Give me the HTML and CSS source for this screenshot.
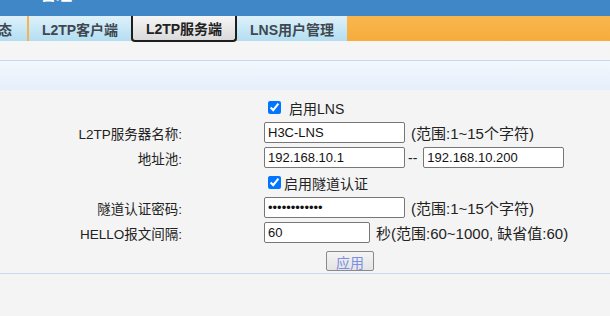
FILE: index.html
```html
<!DOCTYPE html>
<html lang="zh-CN">
<head>
    <meta charset="utf-8">
    <title>L2TP服务端</title>
    <link rel="stylesheet" href="styles.css">
</head>
<body>
    <header class="topbar">
        <span class="title">管理</span>
    </header>

    <nav class="tabs">
        <a class="tab tab-cut" href="#">运行状态</a>
        <a class="tab" href="#">L2TP客户端</a>
        <a class="tab active" href="#">L2TP服务端</a>
        <a class="tab" href="#">LNS用户管理</a>
    </nav>

    <div class="strip"></div>
    <div class="band"></div>

    <form class="form">
        <div class="row">
            <span class="label"></span>
            <label class="field"><input type="checkbox" checked><span class="spaced">启用LNS</span></label>
        </div>
        <div class="row">
            <span class="label">L2TP服务器名称:</span>
            <div class="field">
                <input class="text" type="text" value="H3C-LNS">
                <span class="hint">(范围:1~15个字符)</span>
            </div>
        </div>
        <div class="row">
            <span class="label">地址池:</span>
            <div class="field">
                <input class="text" type="text" value="192.168.10.1">
                <span class="dash">--</span>
                <input class="text" type="text" value="192.168.10.200">
            </div>
        </div>
        <div class="row">
            <span class="label"></span>
            <label class="field"><input type="checkbox" checked><span>启用隧道认证</span></label>
        </div>
        <div class="row">
            <span class="label">隧道认证密码:</span>
            <div class="field">
                <input class="text" type="password" value="123456789012">
                <span class="hint">(范围:1~15个字符)</span>
            </div>
        </div>
        <div class="row">
            <span class="label">HELLO报文间隔:</span>
            <div class="field">
                <input class="text short" type="text" value="60">
                <span class="hint">秒(范围:60~1000, 缺省值:60)</span>
            </div>
        </div>
        <div class="actions">
            <button class="btn" type="button">应用</button>
        </div>
    </form>
</body>
</html>
```

FILE: styles.css
```css
body {
    margin: 0;
    padding: 0;
    background: #f4f4f4;
    font-family: "Liberation Sans", "Noto Sans CJK SC", sans-serif;
    font-size: 13px;
    color: #222;
}
.topbar {
    height: 16px;
    background: #3f87c7;
    overflow: hidden;
}
.topbar .title {
    display: block;
    margin: -13px 0 0 40px;
    color: #fff;
    font-weight: bold;
    font-size: 16px;
    line-height: 16px;
}
.tabs {
    display: flex;
    height: 25px;
    background: linear-gradient(#f9b64e, #f7ac3c);
}
.tab {
    display: flex;
    align-items: center;
    justify-content: center;
    box-sizing: border-box;
    color: #3f4850;
    font-size: 14px;
    font-weight: bold;
    text-decoration: none;
    white-space: nowrap;
    background: linear-gradient(#def1fa, #b3def2);
}
.tab-cut {
    width: 29px;
    justify-content: flex-end;
    padding-right: 15px;
    overflow: hidden;
    border-right: 2px solid #f4b450;
}
.tab:nth-child(2) {
    width: 102px;
}
.tab.active {
    width: 106px;
    height: 26px;
    color: #222;
    background: linear-gradient(#f6f6f6, #dadada);
    border: 2px solid #1e1e1e;
    border-top: 0;
    border-radius: 0 0 4px 4px;
}
.tab:nth-child(4) {
    width: 110px;
}
.strip {
    height: 19px;
    background: #f5f5f5;
    border-bottom: 1px solid #c7d9ec;
}
.band {
    height: 29px;
    background: linear-gradient(#f3f8fe, #e5eefa);
}
.form {
    padding-top: 5px;
    border-bottom: 1px solid #c7dcef;
}
.row {
    display: flex;
    align-items: center;
    height: 25px;
}
.label {
    width: 182px;
    text-align: right;
    font-size: 13.5px;
}
.field {
    margin-left: 82px;
    display: flex;
    align-items: center;
    font-size: 14px;
}
.field input[type="checkbox"] {
    width: 13px;
    height: 13px;
    margin: 0 3px 0 4px;
}
.field .spaced {
    margin-left: 5px;
}
.text {
    box-sizing: border-box;
    width: 141px;
    height: 21px;
    padding: 0 3px;
    border: 1px solid #777;
    border-radius: 2px;
    background: #fff;
    font-family: "Liberation Sans", sans-serif;
    font-size: 13px;
    color: #111;
}
.text.short {
    width: 106px;
}
.hint {
    margin-left: 6px;
    font-size: 15px;
}
.dash {
    margin: 0 6px 0 3px;
}
.actions {
    padding: 6px 0 2px 326px;
}
.btn {
    width: 48px;
    height: 20px;
    padding: 0;
    border: 1px solid #8a8a8a;
    border-radius: 2px;
    background: linear-gradient(#f4f4f4, #e4e4e4);
    font-family: "Liberation Sans", "Noto Sans CJK SC", sans-serif;
    font-size: 14px;
    color: #7d8fe0;
    display: block;
}
```
